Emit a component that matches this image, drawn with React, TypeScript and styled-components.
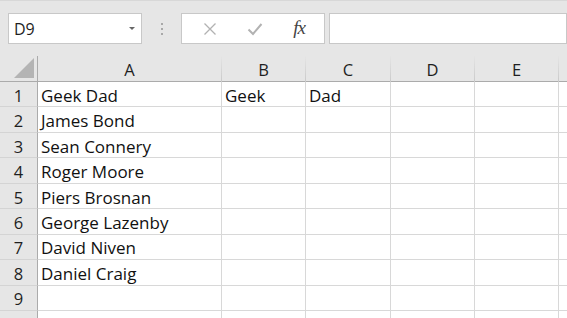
import React from "react"
import styled, { createGlobalStyle } from "styled-components"

const Global = createGlobalStyle`
  html, body {
    margin: 0;
    padding: 0;
    background: #e6e6e6;
  }
  * {
    box-sizing: border-box;
  }
`

const Frame = styled.div`
  width: 567px;
  height: 318px;
  overflow: hidden;
  background: #e6e6e6;
  border-top: 1px solid #d8d8d8;
  font-family: "Open Sans", "Noto Sans", sans-serif;
  color: #1f1f1f;
`

const Toolbar = styled.div`
  display: flex;
  align-items: flex-start;
  height: 55px;
  padding: 12px 0 0 8px;
`

const Box = styled.div<{ w?: number }>`
  height: 31px;
  background: #fff;
  border: 1px solid #c8c8c8;
  display: flex;
  align-items: center;
  flex: ${p => (p.w ? `0 0 ${p.w}px` : "1 0 auto")};
`

const NameText = styled.span`
  flex: 1;
  padding-left: 5px;
  font-size: 16px;
`

const Caret = styled.span`
  width: 0;
  height: 0;
  margin-right: 6px;
  border-left: 3.5px solid transparent;
  border-right: 3.5px solid transparent;
  border-top: 3.5px solid #666;
`

const Dots = styled.div`
  flex: 0 0 39px;
  height: 31px;
  display: flex;
  flex-direction: column;
  align-items: center;
  justify-content: center;
  gap: 3px;

  & > i {
    width: 2px;
    height: 2px;
    background: #a8a8a8;
  }
`

const Buttons = styled(Box)`
  justify-content: space-around;
  padding: 0 4px 0 6px;
  margin-right: 4px;
`

const Fx = styled.span`
  font-family: "Liberation Serif", "DejaVu Serif", serif;
  font-style: italic;
  font-size: 19px;
  color: #444;
  letter-spacing: -1px;
  margin-top: -2px;
`

const Sheet = styled.div`
  display: grid;
  grid-template-columns: 38px 184px 84px 85px 84px 84px 84px;
  grid-auto-rows: 25.46px;
  grid-template-rows: 26px;
  background: #fff;
`

const Corner = styled.div`
  background: #e6e6e6;
  border-right: 1px solid #ababab;
  border-bottom: 1px solid #ababab;
  position: relative;

  &::after {
    content: "";
    position: absolute;
    right: 3px;
    bottom: 3px;
    width: 0;
    height: 0;
    border-left: 20px solid transparent;
    border-bottom: 20px solid #b4b4b4;
  }
`

const ColHead = styled.div`
  background: #e6e6e6;
  border-right: 1px solid;
  border-image: linear-gradient(#e6e6e6, #c8c8c8) 1;
  border-image-width: 0 1px 0 0;
  display: flex;
  align-items: center;
  justify-content: center;
  font-size: 16.5px;
  padding-top: 1px;
  box-shadow: inset 0 -1px 0 #ababab;
`

const RowHead = styled.div`
  background: #e6e6e6;
  border-right: 1px solid #ababab;
  border-bottom: 1px solid #d4d4d4;
  display: flex;
  align-items: center;
  justify-content: center;
  font-size: 16.5px;
  padding-top: 2px;
`

const Cell = styled.div`
  border-right: 1px solid #d8d8d8;
  border-bottom: 1px solid #d8d8d8;
  display: flex;
  align-items: center;
  padding: 2px 0 0 3px;
  font-size: 17px;
  white-space: nowrap;
  color: #111;
`

const cols = ["A", "B", "C", "D", "E", ""]

const data: string[][] = [
  ["Geek Dad", "Geek", "Dad"],
  ["James Bond"],
  ["Sean Connery"],
  ["Roger Moore"],
  ["Piers Brosnan"],
  ["George Lazenby"],
  ["David Niven"],
  ["Daniel Craig"],
  [],
  [],
]

const XIcon = () => (
  <svg width="14" height="14" viewBox="0 0 14 14">
    <path d="M1.5 1.5 L12.5 12.5 M12.5 1.5 L1.5 12.5" stroke="#b2b2b2" strokeWidth="1.3" fill="none" />
  </svg>
)

const CheckIcon = () => (
  <svg width="16" height="14" viewBox="0 0 16 14">
    <path d="M1.5 7.5 L6 12 L14.5 2" stroke="#b2b2b2" strokeWidth="2" fill="none" />
  </svg>
)

export default function App() {
  return (
    <Frame>
      <Global />
      <Toolbar>
        <Box w={134}>
          <NameText>D9</NameText>
          <Caret />
        </Box>
        <Dots>
          <i />
          <i />
          <i />
        </Dots>
        <Buttons w={144}>
          <XIcon />
          <CheckIcon />
          <Fx>fx</Fx>
        </Buttons>
        <Box />
      </Toolbar>
      <Sheet>
        <Corner />
        {cols.map((c, i) => (
          <ColHead key={i}>{c}</ColHead>
        ))}
        {data.map((row, r) => (
          <React.Fragment key={r}>
            {/* row 10 is only a sliver at the bottom edge, its number is out of view */}
            <RowHead>{r < 9 ? r + 1 : ""}</RowHead>
            {cols.map((_, c) => (
              <Cell key={c}>{row[c] || ""}</Cell>
            ))}
          </React.Fragment>
        ))}
      </Sheet>
    </Frame>
  )
}
